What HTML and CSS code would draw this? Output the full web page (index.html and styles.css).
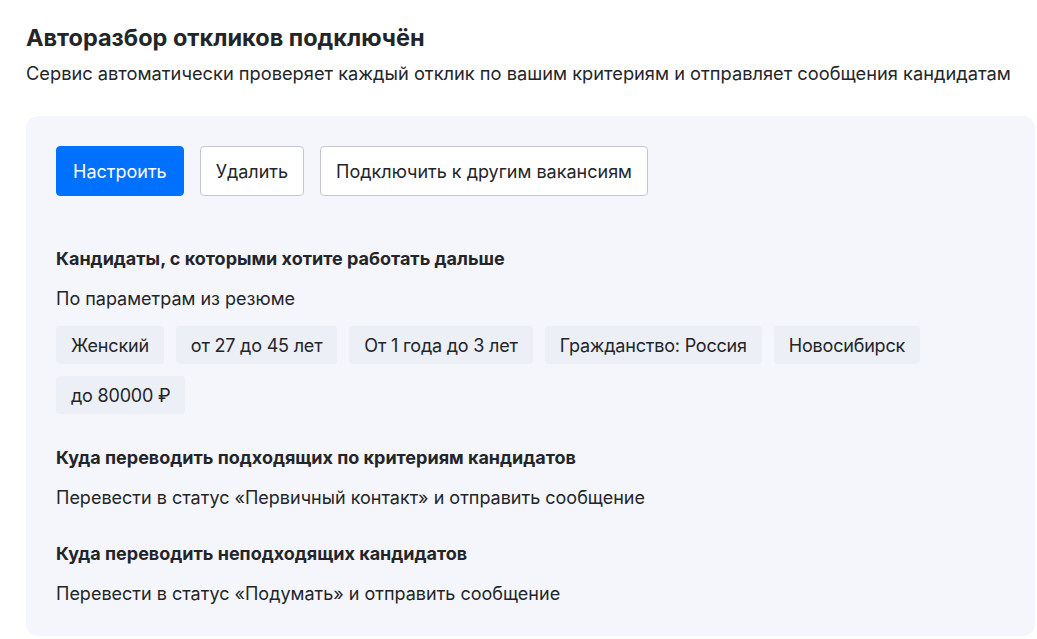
FILE: index.html
```html
<!DOCTYPE html>
<html lang="ru">
<head>
    <meta charset="UTF-8">
    <meta name="viewport" content="width=device-width, initial-scale=1.0">
    <title>Авторазбор откликов</title>
    <link rel="stylesheet" href="styles.css">
</head>
<body>

    <section class="autosort">
        <h1 class="autosort-title">Авторазбор откликов подключён</h1>
        <p class="autosort-lead">Сервис автоматически проверяет каждый отклик по вашим критериям и отправляет сообщения кандидатам</p>

        <div class="card">
            <div class="actions">
                <button class="btn btn-primary">Настроить</button>
                <button class="btn">Удалить</button>
                <button class="btn">Подключить к другим вакансиям</button>
            </div>

            <div class="block">
                <h3 class="block-title">Кандидаты, с которыми хотите работать дальше</h3>
                <p class="block-text">По параметрам из резюме</p>
                <div class="tags">
                    <span class="tag">Женский</span>
                    <span class="tag">от 27 до 45 лет</span>
                    <span class="tag">От 1 года до 3 лет</span>
                    <span class="tag">Гражданство: Россия</span>
                    <span class="tag">Новосибирск</span>
                    <span class="tag">до 80000 ₽</span>
                </div>
            </div>

            <div class="block">
                <h3 class="block-title">Куда переводить подходящих по критериям кандидатов</h3>
                <p class="block-text">Перевести в статус «Первичный контакт» и отправить сообщение</p>
            </div>

            <div class="block">
                <h3 class="block-title">Куда переводить неподходящих кандидатов</h3>
                <p class="block-text">Перевести в статус «Подумать» и отправить сообщение</p>
            </div>
        </div>
    </section>

</body>
</html>
```

FILE: styles.css
```css
/* базовые */
:root {
    --text: #232529;
    --blue: #0070ff;
    --card: #f4f6fb;
    --tag: #eceff5;
    --border: #c4c9d1;
}

* { margin: 0; padding: 0; box-sizing: border-box; }
body { font-family: 'Inter', 'Noto Sans', sans-serif; font-size: 18px; color: var(--text); background: #fff; }

/* шапка блока */
.autosort { padding: 24px 2px 0 26px; }
.autosort-title { font-size: 23.5px; line-height: 28px; font-weight: 700; }
.autosort-lead { font-size: 18.25px; line-height: 24px; margin-top: 9px; }

/* карточка */
.card {
    margin-top: 31px;
    background: var(--card);
    border-radius: 12px;
    padding: 30px 30px 30px;
}

.actions { display: flex; gap: 16px; margin-bottom: 51px; }

.btn {
    height: 50px;
    padding: 0 15px;
    font-family: inherit;
    font-size: 18px;
    color: var(--text);
    background: #fff;
    border: 1px solid var(--border);
    border-radius: 4px;
    cursor: pointer;
}
.btn-primary { background: var(--blue); border-color: var(--blue); color: #fff; padding: 0 16px; }

.block + .block { margin-top: 32px; }
.block-title { font-size: 18px; line-height: 24px; font-weight: 700; }
.block-text { line-height: 24px; margin-top: 16px; }

/* теги */
.tags { display: flex; flex-wrap: wrap; gap: 12px; margin-top: 15px; }
.tag {
    background: var(--tag);
    border-radius: 4px;
    padding: 0 15px;
    height: 38px;
    display: flex;
    align-items: center;
    letter-spacing: -0.2px;
}
```
